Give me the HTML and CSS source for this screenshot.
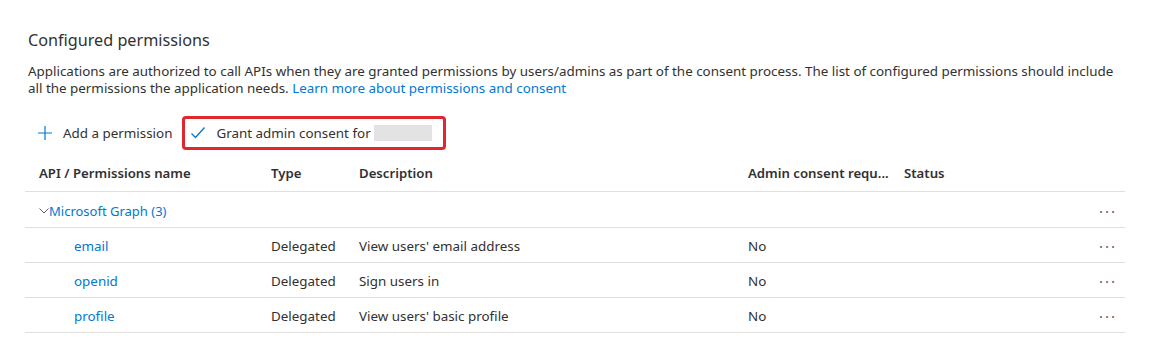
FILE: index.html
```html
<!DOCTYPE html>
<html lang="en">

<head>
  <meta charset="UTF-8" />
  <meta name="viewport" content="width=device-width, initial-scale=1.0" />
  <title>Configured permissions</title>
  <link rel="stylesheet" href="styles.css">
</head>

<body>
  <section class="perms">
    <h2>Configured permissions</h2>
    <p class="intro">Applications are authorized to call APIs when they are granted permissions by users/admins as part of the consent process. The list of configured permissions should include all the permissions the application needs. <a href="#">Learn more about permissions and consent</a></p>

    <div class="toolbar">
      <button class="tool">
        <svg width="16" height="16" viewBox="0 0 16 16"><path d="M8 1v14M1 8h14" stroke="#0078d4" stroke-width="1.2" fill="none"/></svg>
        Add a permission
      </button>
      <button class="tool grant">
        <svg width="16" height="16" viewBox="0 0 16 16"><path d="M1.5 8.5l4 4 9-10" stroke="#0078d4" stroke-width="1.3" fill="none"/></svg>
        Grant admin consent for
        <span class="tenant"></span>
      </button>
    </div>

    <div class="grid">
      <div class="row head">
        <div>API / Permissions name</div>
        <div>Type</div>
        <div>Description</div>
        <div>Admin consent requ...</div>
        <div>Status</div>
        <div></div>
      </div>
      <div class="row group">
        <div class="api">
          <svg width="10" height="10" viewBox="0 0 10 10"><path d="M0.5 2.5l4.5 4.5 4.5-4.5" stroke="#605e5c" stroke-width="1" fill="none"/></svg>
          <a href="#">Microsoft Graph (3)</a>
        </div>
        <div></div>
        <div></div>
        <div></div>
        <div></div>
        <div class="more">&middot;&middot;&middot;</div>
      </div>
      <div class="row">
        <div class="name"><a href="#">email</a></div>
        <div>Delegated</div>
        <div>View users' email address</div>
        <div>No</div>
        <div></div>
        <div class="more">&middot;&middot;&middot;</div>
      </div>
      <div class="row">
        <div class="name"><a href="#">openid</a></div>
        <div>Delegated</div>
        <div>Sign users in</div>
        <div>No</div>
        <div></div>
        <div class="more">&middot;&middot;&middot;</div>
      </div>
      <div class="row">
        <div class="name"><a href="#">profile</a></div>
        <div>Delegated</div>
        <div>View users' basic profile</div>
        <div>No</div>
        <div></div>
        <div class="more">&middot;&middot;&middot;</div>
      </div>
    </div>
  </section>
</body>

</html>
```

FILE: styles.css
```css
* {
  margin: 0;
  padding: 0;
  box-sizing: border-box;
  font-family: 'Noto Sans', 'Open Sans', sans-serif;
}

body {
  background-color: #fff;
  color: #323130;
}

.perms {
  padding: 29px 42px 0 25px;
}

h2 {
  font-size: 16.2px;
  font-weight: 400;
  line-height: 22px;
  margin-bottom: 12px;
  padding-left: 3px;
}

.intro {
  font-size: 13.4px;
  line-height: 17px;
  max-width: 1098px;
  padding-left: 3px;
  color: #323130;
}

a {
  color: #0078d4;
  text-decoration: none;
}

.toolbar {
  display: flex;
  align-items: center;
  gap: 8px;
  margin-top: 19px;
  padding-left: 10px;
}

.tool {
  display: flex;
  align-items: center;
  gap: 10px;
  height: 34px;
  padding: 0 2px;
  border: none;
  background: none;
  font-size: 13.4px;
  color: #323130;
  cursor: pointer;
}

.grant {
  border: 3px solid #e0262f;
  border-radius: 4px;
  padding: 0 11px 0 5px;
}

.tenant {
  display: inline-block;
  width: 58px;
  height: 16px;
  background-color: #e3e3e3;
  margin-left: -7px;
}

.grid {
  margin-top: 5px;
}

.row {
  display: grid;
  grid-template-columns: 232px 88px 389px 156px 1fr 40px;
  align-items: center;
  height: 35px;
  padding-top: 2px;
  border-bottom: 1px solid #e1dfdd;
  font-size: 13.4px;
}

.row > div {
  padding-left: 14px;
  white-space: nowrap;
}

.head {
  height: 37px;
  padding-top: 0;
  font-size: 13.2px;
  font-weight: 600;
  color: #323130;
}

.group {
  height: 36px;
  font-size: 13px;
}

.api {
  display: flex;
  align-items: center;
}

.name {
  padding-left: 49px !important;
}

.more {
  color: #605e5c;
  font-size: 15px;
  letter-spacing: 2px;
  text-align: right;
  padding-right: 8px;
}
```
